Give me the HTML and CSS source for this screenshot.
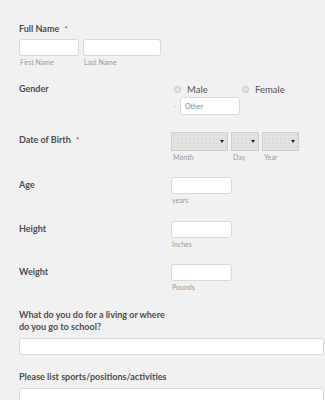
FILE: index.html
```html
<!DOCTYPE html>
<html>
    <head>
        <link rel="stylesheet" href="styles.css">
    </head>
    <body>
        <div class="form">
            <div class="block">
                <div class="label">Full Name <span class="req">*</span></div>
                <div class="pair">
                    <div class="field">
                        <input class="box first" type="text">
                        <div class="sub">First Name</div>
                    </div>
                    <div class="field">
                        <input class="box last" type="text">
                        <div class="sub">Last Name</div>
                    </div>
                </div>
            </div>

            <div class="row gender-row">
                <div class="row-label">Gender</div>
                <div class="row-field">
                    <div class="radios">
                        <span class="radio male"><i class="dot"></i>Male</span>
                        <span class="radio"><i class="dot"></i>Female</span>
                    </div>
                    <div class="other-line">
                        <i class="tiny"></i>
                        <input class="box other" type="text" placeholder="Other">
                    </div>
                </div>
            </div>

            <div class="row dob-row">
                <div class="row-label">Date of Birth <span class="req">*</span></div>
                <div class="row-field pair">
                    <div class="field">
                        <div class="select month"><b></b></div>
                        <div class="sub">Month</div>
                    </div>
                    <div class="field">
                        <div class="select day"><b></b></div>
                        <div class="sub">Day</div>
                    </div>
                    <div class="field">
                        <div class="select year"><b></b></div>
                        <div class="sub">Year</div>
                    </div>
                </div>
            </div>

            <div class="row num-row age">
                <div class="row-label">Age</div>
                <div class="row-field">
                    <input class="box small" type="text">
                    <div class="sub">years</div>
                </div>
            </div>

            <div class="row num-row">
                <div class="row-label">Height</div>
                <div class="row-field">
                    <input class="box small" type="text">
                    <div class="sub">Inches</div>
                </div>
            </div>

            <div class="row num-row weight">
                <div class="row-label">Weight</div>
                <div class="row-field">
                    <input class="box small" type="text">
                    <div class="sub">Pounds</div>
                </div>
            </div>

            <div class="block question">
                <div class="label">What do you do for a living or where<br>do you go to school?</div>
                <input class="box wide" type="text">
            </div>

            <div class="block question">
                <div class="label">Please list sports/positions/activities</div>
                <input class="box wide" type="text">
            </div>
        </div>
    </body>
</html>
```

FILE: styles.css
```css
body{
    margin:0;
    background-color: #f1f1f1;
    font-family: Lato, "Open Sans", sans-serif;
    overflow: hidden;
}
.form{
    padding: 23px 0 0 19px;
}
.label, .row-label{
    font-size: 9px;
    font-weight: bold;
    color: #4d4d4d;
    line-height: 12px;
}
.req{
    color: #e03c3c;
    margin-left: 3px;
    font-size: 8px;
}
.pair{
    display:flex;
    gap:4px;
    margin-top:4px;
}
.box{
    display:block;
    box-sizing: border-box;
    height:17px;
    margin:0;
    padding:0 4px;
    background-color: white;
    border: 1px solid #d9d9d9;
    border-radius: 3px;
    font-family: Lato, sans-serif;
    font-size: 7px;
    outline: none;
}
.box::placeholder{
    color:#888;
}
.first{ width:60px; }
.last{ width:78px; }
.sub{
    font-size: 7px;
    color: #999;
    line-height: 10px;
    padding-top: 1px;
    padding-left: 1px;
}

/* rows with label on the left */
.row{
    display:flex;
    margin-top:15px;
}
.row-label{
    width:152px;
    flex-shrink: 0;
    line-height: 14px;
}
.gender-row{
    margin-top:15px;
}
.radios{
    display:flex;
    height:14px;
    align-items: center;
    font-size: 9.5px;
    color:#555;
}
.radio{
    display:flex;
    align-items: center;
    padding-left:3px;
}
.radio.male{
    width:65px;
}
.dot{
    width:7px;
    height:7px;
    border-radius:50%;
    background-color: #e4e4e4;
    border:1px solid #c4c4c4;
    box-sizing: border-box;
    margin-right:6px;
}
.other-line{
    display:flex;
    align-items: center;
    margin-top:1px;
}
.tiny{
    width:1px;
    height:1px;
    background-color: #bbb;
    margin:0 4px 0 4px;
}
.other{
    width:60px;
    height:18px;
}

.dob-row{
    margin-top:17px;
}
.dob-row .row-label{
    padding-top:1px;
}
.dob-row .pair{
    margin-top:0;
    gap:3px;
}
.select{
    position:relative;
    box-sizing: border-box;
    height:19px;
    border:1px solid #cfcfcf;
    background-color: #e3e3e3;
    background-image: radial-gradient(#cdcdcd 0.6px, transparent 0.8px);
    background-size: 4px 4px;
}
.select b{
    position:absolute;
    right:3px;
    top:7px;
    border-left:2px solid transparent;
    border-right:2px solid transparent;
    border-top:3px solid #222;
}
.month{ width:57px; }
.day{ width:28px; }
.year{ width:37px; }
.dob-row .sub{
    padding-left:2px;
}

.num-row{
    margin-top:16px;
}
.num-row .row-label{
    padding-top:1px;
}
.age{
    margin-top:15px;
}
.small{
    width:61px;
}
.weight{
    margin-top:15px;
}

.question{
    margin-top:17px;
}
.question + .question{
    margin-top:16px;
}
.wide{
    width:305px;
    margin-top:5px;
}
```
